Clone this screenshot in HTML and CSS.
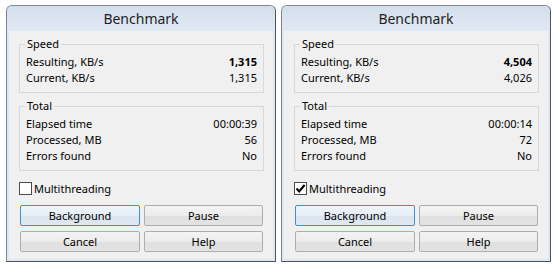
FILE: index.html
```html
<!DOCTYPE html>
<html lang="en">
<head>
    <meta charset="UTF-8">
    <title>Benchmark</title>
    <link rel="stylesheet" href="styles.css">
</head>
<body>
    <div class="desktop">
        <div class="dialog">
            <div class="titlebar">Benchmark</div>
            <div class="client">
                <fieldset class="group">
                    <legend>Speed</legend>
                    <div class="row"><span>Resulting, KB/s</span><b>1,315</b></div>
                    <div class="row"><span>Current, KB/s</span><span>1,315</span></div>
                </fieldset>
                <fieldset class="group group-total">
                    <legend>Total</legend>
                    <div class="row"><span>Elapsed time</span><span>00:00:39</span></div>
                    <div class="row"><span>Processed, MB</span><span>56</span></div>
                    <div class="row"><span>Errors found</span><span>No</span></div>
                </fieldset>
                <label class="check">
                    <span class="box"></span>
                    <span>Multithreading</span>
                </label>
                <div class="buttons">
                    <button class="btn btn-default">Background</button>
                    <button class="btn">Pause</button>
                    <button class="btn">Cancel</button>
                    <button class="btn">Help</button>
                </div>
            </div>
        </div>

        <div class="dialog">
            <div class="titlebar">Benchmark</div>
            <div class="client">
                <fieldset class="group">
                    <legend>Speed</legend>
                    <div class="row"><span>Resulting, KB/s</span><b>4,504</b></div>
                    <div class="row"><span>Current, KB/s</span><span>4,026</span></div>
                </fieldset>
                <fieldset class="group group-total">
                    <legend>Total</legend>
                    <div class="row"><span>Elapsed time</span><span>00:00:14</span></div>
                    <div class="row"><span>Processed, MB</span><span>72</span></div>
                    <div class="row"><span>Errors found</span><span>No</span></div>
                </fieldset>
                <label class="check">
                    <span class="box">
                        <svg width="11" height="11" viewBox="0 0 11 11"><path d="M1.5 5.5 L4.2 8.4 L9.6 2" fill="none" stroke="#000" stroke-width="2.2"/></svg>
                    </span>
                    <span>Multithreading</span>
                </label>
                <div class="buttons">
                    <button class="btn btn-default">Background</button>
                    <button class="btn">Pause</button>
                    <button class="btn">Cancel</button>
                    <button class="btn">Help</button>
                </div>
            </div>
        </div>
    </div>
</body>
</html>
```

FILE: styles.css
```css
* {
    margin: 0;
    padding: 0;
    box-sizing: border-box;
}

body {
    font-family: "Noto Sans", "Liberation Sans", sans-serif;
    font-size: 11px;
    color: #000;
    background: #fff;
}

.desktop {
    display: flex;
    gap: 5px;
    padding: 5px 0 0 6px;
}

.dialog {
    width: 270px;
    height: 257px;
    display: flex;
    flex-direction: column;
    background: #dfe8f2;
    border: 1px solid #7c8590;
    border-right-color: #4d535a;
    border-bottom-color: #4d535a;
    border-radius: 6px 6px 0 0;
}

.titlebar {
    height: 25px;
    line-height: 25px;
    text-align: center;
    font-size: 14px;
    color: #1e1e1e;
    background: linear-gradient(#d3dfec, #e1e9f3);
    border-radius: 5px 5px 0 0;
}

.client {
    flex: 1;
    margin: 0 2px 2px;
    padding: 4px 9px 0 10px;
    background: #f0f0f0;
    border-top: 1px solid #eef3f8;
}

.group {
    border: 1px solid #d5d9dd;
    padding: 2px 6px 6px;
    line-height: 16px;
}

.group legend {
    padding: 0 2px;
    margin-left: -1px;
}

.group-total {
    margin-top: 5px;
}

.row {
    display: flex;
    justify-content: space-between;
}

.row b {
    font-weight: 700;
}

.check {
    display: flex;
    align-items: center;
    gap: 2px;
    height: 16px;
    margin-top: 9px;
}

.box {
    width: 13px;
    height: 13px;
    border: 1px solid #4a4a4a;
    background: #fff;
    display: flex;
    align-items: center;
    justify-content: center;
}

.buttons {
    display: grid;
    grid-template-columns: 120px 119px;
    gap: 5px 4px;
    margin: 9px 1px 0;
}

.btn {
    height: 21px;
    font-family: inherit;
    font-size: 11px;
    color: #000;
    background: linear-gradient(#f3f3f3 0%, #ececec 50%, #dfdfdf 51%, #e3e3e3 100%);
    border: 1px solid #adadad;
    border-radius: 2px;
}

.btn-default {
    border-color: #3c8fd8;
    background: linear-gradient(#eef4fa 0%, #e6eef6 50%, #dbe4ed 51%, #e0e8f0 100%);
}
```
